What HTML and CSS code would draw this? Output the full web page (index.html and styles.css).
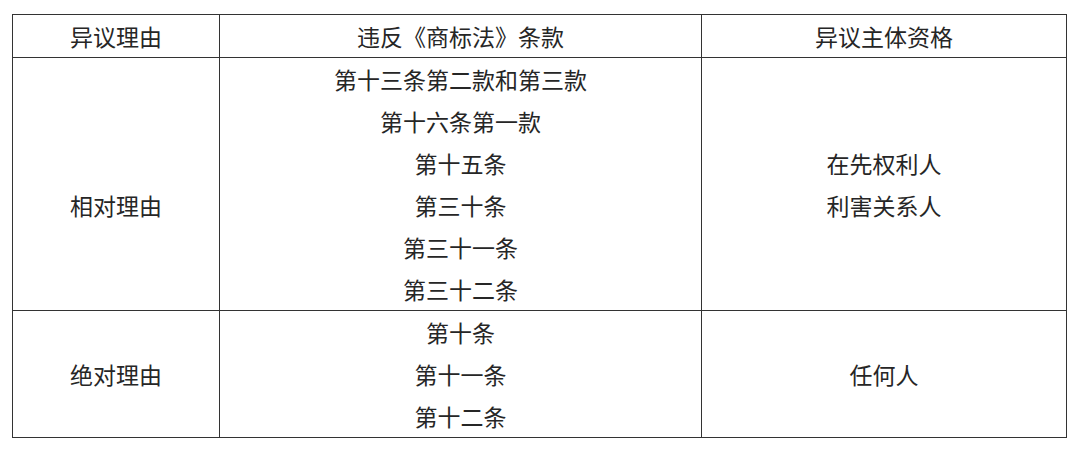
FILE: index.html
```html
<!DOCTYPE html>
<html lang="zh-CN">
<head>
<meta charset="utf-8">
<link rel="stylesheet" href="styles.css">
</head>
<body>
<table class="grid">
  <colgroup>
    <col class="c1"><col class="c2"><col class="c3">
  </colgroup>
  <tr class="head">
    <td>异议理由</td>
    <td>违反《商标法》条款</td>
    <td>异议主体资格</td>
  </tr>
  <tr>
    <td class="low">相对理由</td>
    <td>第十三条第二款和第三款<br>第十六条第一款<br>第十五条<br>第三十条<br>第三十一条<br>第三十二条</td>
    <td>在先权利人<br>利害关系人</td>
  </tr>
  <tr>
    <td>绝对理由</td>
    <td>第十条<br>第十一条<br>第十二条</td>
    <td>任何人</td>
  </tr>
</table>
</body>
</html>
```
FILE: styles.css
```css
html, body {
  margin: 0;
  padding: 0;
  background: #fff;
}
body {
  padding: 14px 0 0 12px;
  font-family: "Noto Sans CJK SC", "Noto Sans", sans-serif;
  color: #262626;
}
.grid {
  border-collapse: collapse;
  table-layout: fixed;
  width: 1054px;
  font-size: 23px;
  line-height: 42px;
}
.c1 { width: 207px; }
.c2 { width: 482px; }
.c3 { width: 365px; }
.grid td {
  border: 1px solid #333;
  text-align: center;
  vertical-align: middle;
  padding: 0;
}
.grid td.low {
  padding-top: 42px;
}
.head td {
  height: 42px;
}
```
